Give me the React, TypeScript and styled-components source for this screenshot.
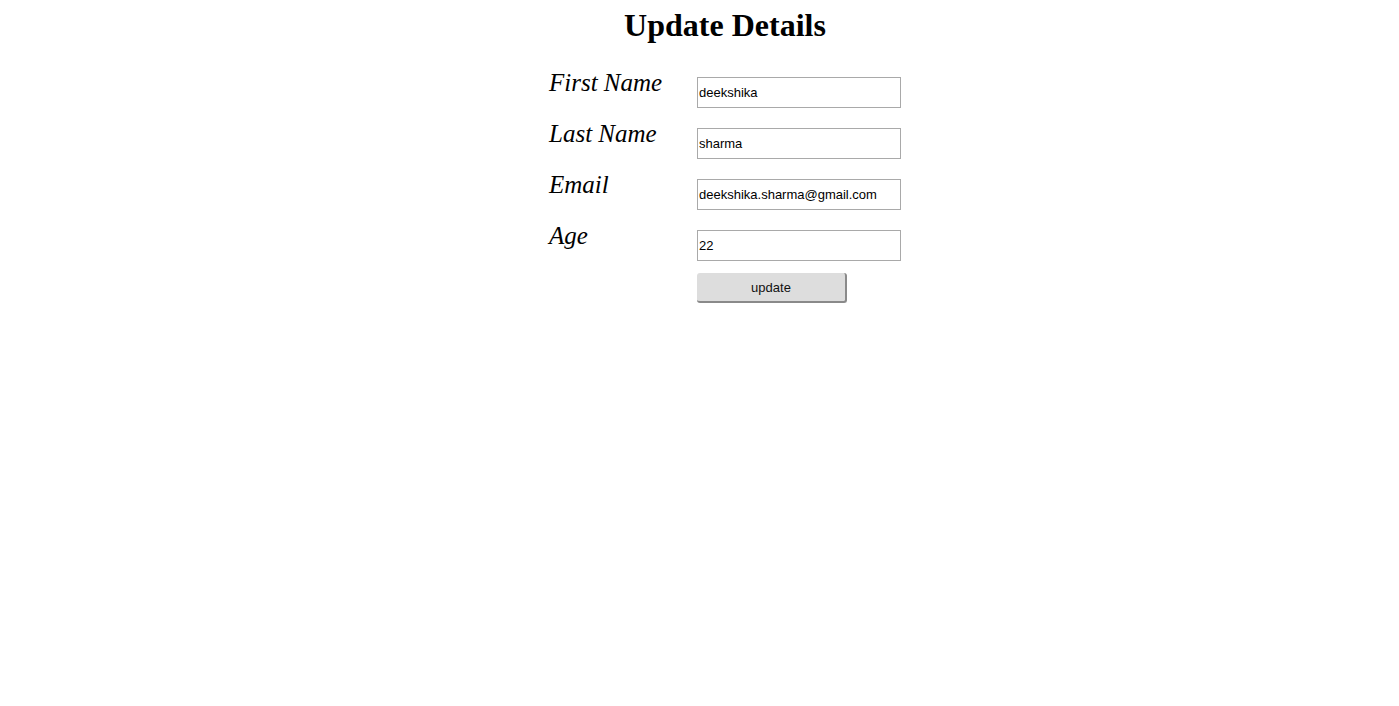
import React from "react";
import styled, { createGlobalStyle } from "styled-components";

const Global = createGlobalStyle`
  html, body { margin: 0; padding: 0; background: #fff; }
  body { font-family: "Liberation Serif", "Times New Roman", serif; color: #000; }
`;

const Page = styled.div`
  display: flex;
  justify-content: center;
  padding-left: 51px;
`;

const Card = styled.div`
  width: 352px;
  display: flex;
  flex-direction: column;
`;

const Title = styled.h1`
  margin: 7px 0 0;
  text-align: center;
  font-size: 32px;
  font-weight: bold;
  line-height: 37px;
`;

const Form = styled.form`
  margin-top: 33px;
  display: grid;
  grid-template-columns: 148px 204px;
  row-gap: 20px;
`;

const Label = styled.label`
  font-style: italic;
  font-size: 25px;
  line-height: 30px;
  margin-top: -9px;
`;

const Input = styled.input`
  box-sizing: border-box;
  width: 204px;
  height: 31px;
  border: 1px solid #a9a9a9;
  padding: 0 1px;
  font-family: "Liberation Sans", Arial, sans-serif;
  font-size: 13px;
  color: #000;
  outline: none;
`;

const Button = styled.button`
  grid-column: 2;
  margin-top: -8px;
  width: 150px;
  height: 30px;
  box-sizing: border-box;
  border: none;
  border-right: 2px solid #8a8a8a;
  border-bottom: 2px solid #8a8a8a;
  border-radius: 3px;
  background: #dddddd;
  font-family: "Liberation Sans", Arial, sans-serif;
  font-size: 13px;
  color: #111;
  padding: 0;
`;

const fields = [
  { label: "First Name", value: "deekshika" },
  { label: "Last Name", value: "sharma" },
  { label: "Email", value: "deekshika.sharma@gmail.com" },
  { label: "Age", value: "22" },
];

export default function App() {
  return (
    <>
      <Global />
      <Page>
        <Card>
          <Title>Update Details</Title>
          <Form onSubmit={(e) => e.preventDefault()}>
            {fields.map((f) => (
              <React.Fragment key={f.label}>
                <Label>{f.label}</Label>
                <Input defaultValue={f.value} />
              </React.Fragment>
            ))}
            <Button type="submit">update</Button>
          </Form>
        </Card>
      </Page>
    </>
  );
}
